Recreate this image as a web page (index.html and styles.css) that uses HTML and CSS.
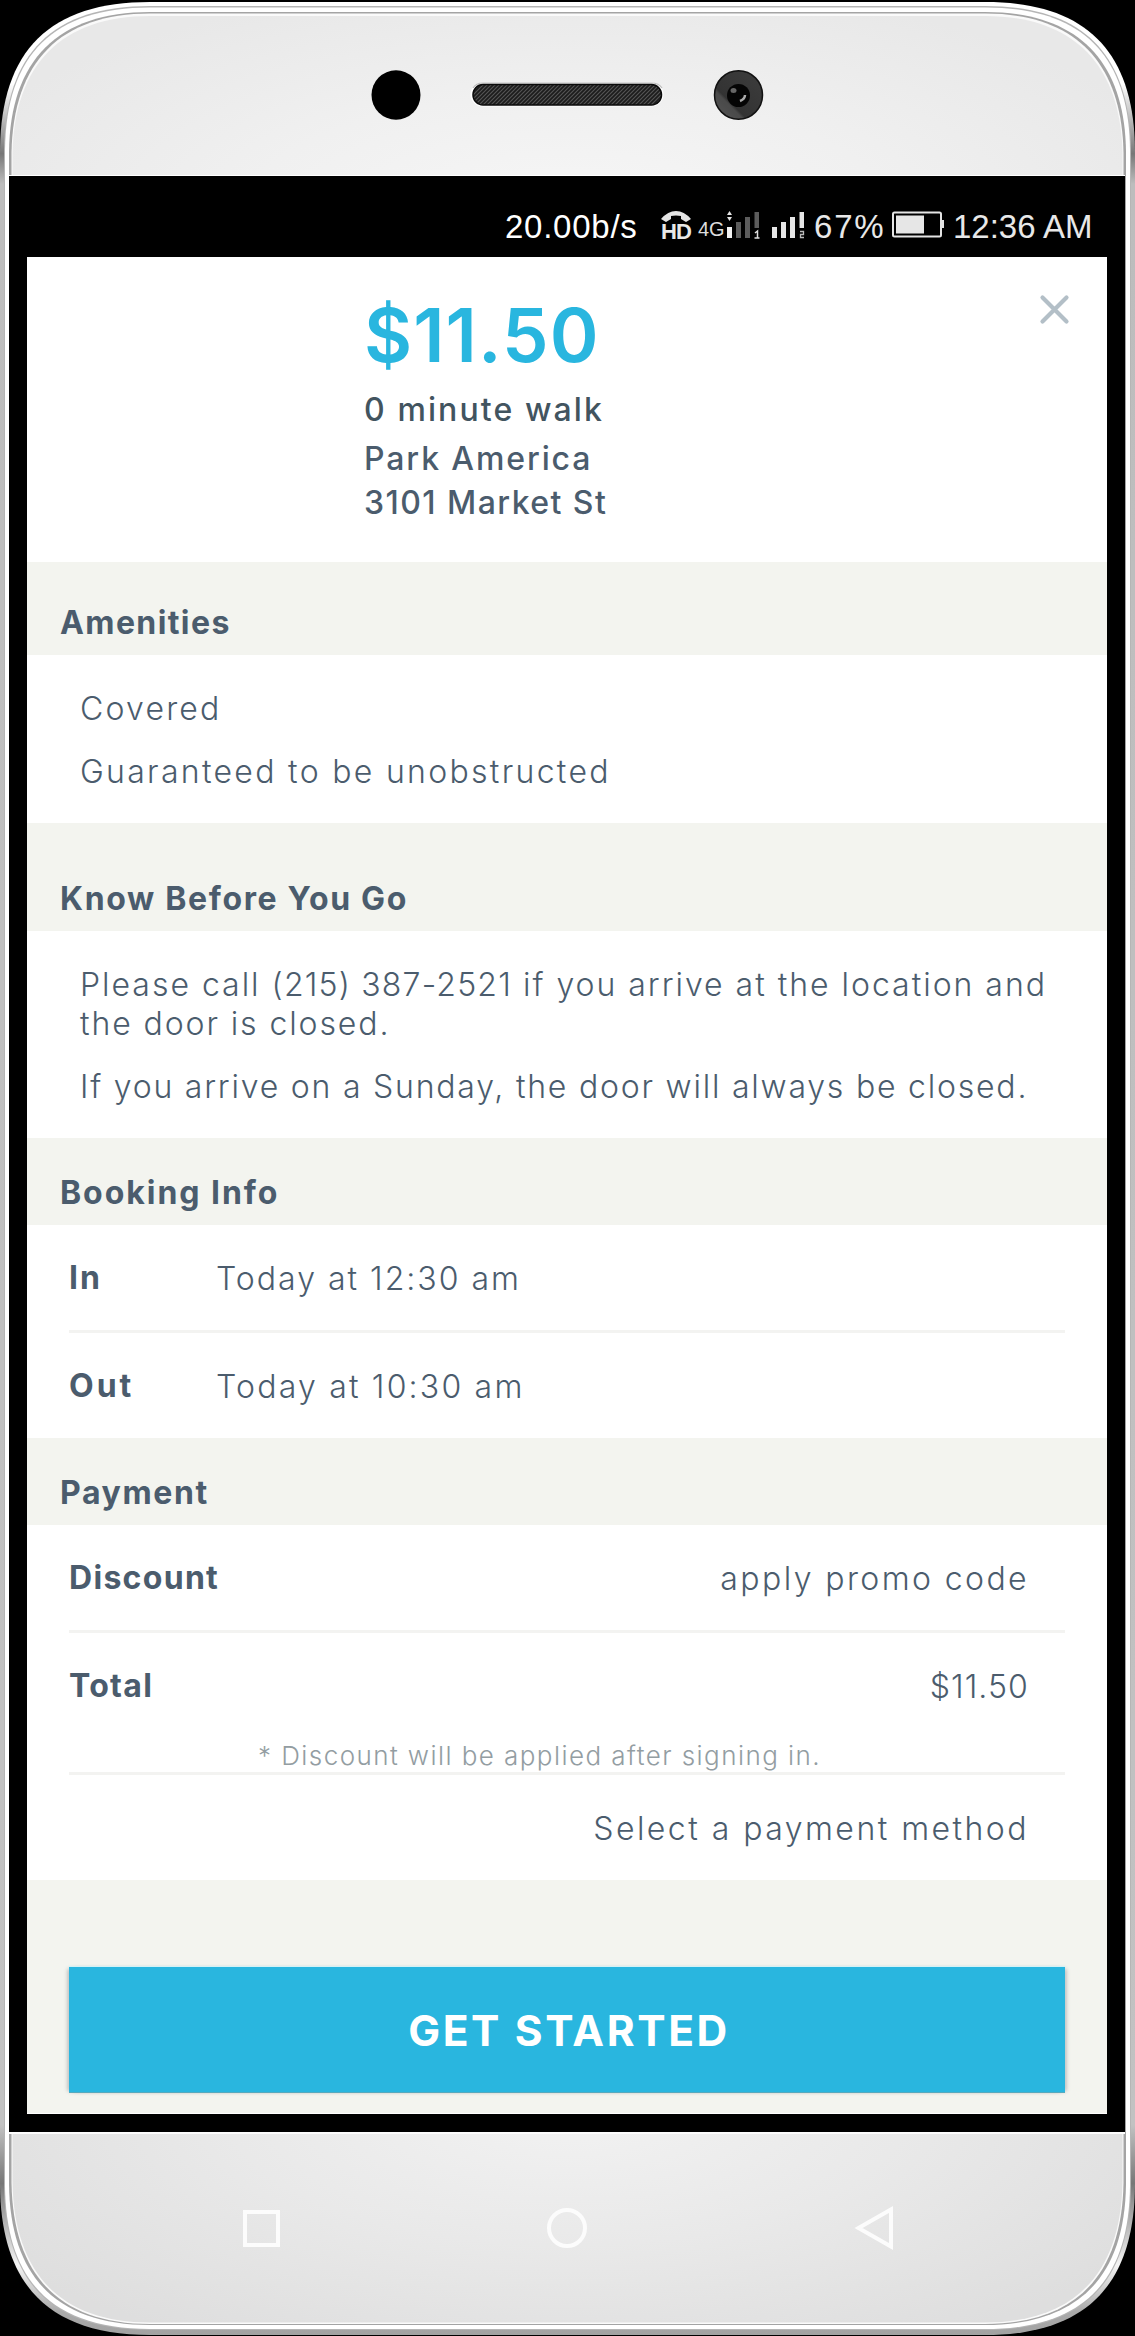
FILE: index.html
```
<!DOCTYPE html>
<html lang="en">
<head>
<meta charset="utf-8">
<title>Parking details</title>
<link rel="stylesheet" href="styles.css">
</head>
<body>
<div class="phone">
  <svg class="shell" width="1135" height="2336" viewBox="0 0 1135 2336" aria-hidden="true">
    <defs>
      <linearGradient id="edge" x1="0" y1="0" x2="0" y2="1">
        <stop offset="0" stop-color="#fff"/><stop offset=".035" stop-color="#fff"/><stop offset=".065" stop-color="#777"/>
        <stop offset=".078" stop-color="#bdbdbd"/><stop offset=".91" stop-color="#c2c2c2"/><stop offset=".935" stop-color="#777"/>
        <stop offset=".97" stop-color="#f4f4f4"/><stop offset=".99" stop-color="#aaa"/><stop offset="1" stop-color="#a2a2a2"/>
      </linearGradient>
      <radialGradient id="faceTop" gradientUnits="userSpaceOnUse" cx="0" cy="0" r="1" gradientTransform="translate(567 210) scale(640 230)">
        <stop offset="0" stop-color="#f6f6f6"/><stop offset=".5" stop-color="#f0f0f0"/><stop offset="1" stop-color="#e8e8e8"/>
      </radialGradient>
      <radialGradient id="faceBottom" gradientUnits="userSpaceOnUse" cx="0" cy="0" r="1" gradientTransform="translate(567 2110) scale(680 270)">
        <stop offset="0" stop-color="#f2f2f2"/><stop offset=".5" stop-color="#e9e9e9"/><stop offset="1" stop-color="#dedede"/>
      </radialGradient>
      <linearGradient id="lens" x1="0" y1="1" x2="1" y2="0">
        <stop offset="0" stop-color="#555"/><stop offset=".3" stop-color="#4a4a4a"/><stop offset=".34" stop-color="#333"/><stop offset="1" stop-color="#3d3d3d"/>
      </linearGradient>
      <pattern id="mesh" width="4" height="4" patternUnits="userSpaceOnUse">
        <rect width="4" height="4" fill="#1c1c1c"/><path d="M-1 5L5-1M-1 1L1-1M3 5L5 3" stroke="#555" stroke-width="1.1"/>
      </pattern>
      <clipPath id="upper"><rect width="1135" height="1100"/></clipPath>
      <clipPath id="lower"><rect y="1100" width="1135" height="1236"/></clipPath>
    </defs>
    <path fill="url(#edge)" d="M0 150C1 50 50 2 150 2H985C1085 2 1134 50 1135 150V2186C1134 2286 1085 2335 985 2335H150C50 2335 1 2286 0 2186Z"/>
    <path fill="#b5b5b5" d="M4 150C5 53 53 6 150 6H985C1082 6 1130 53 1131 150V2186C1130 2284 1082 2330 985 2330H150C53 2330 5 2284 4 2186Z"/>
    <path fill="#fff" d="M5 150C6 54 54 7.500 150 7.500H985C1081 7.500 1129 54 1130 150V2186C1129 2283 1081 2329 985 2329H150C54 2329 6 2283 5 2186Z"/>
    <path fill="#a4a4a4" d="M9 152C10 60 58 12 150 12H985C1077 12 1125 60 1126 152V2184C1125 2278 1077 2325 985 2325H150C58 2325 10 2278 9 2184Z"/>
    <path fill="#fafafa" d="M11.500 153C13 62 60 13.500 150 13.500H985C1075 13.500 1122 62 1123.500 153V2183C1122 2276 1075 2324 985 2324H150C60 2324 13 2276 11.500 2183Z"/>
    <g id="face">
      <path clip-path="url(#upper)" fill="url(#faceTop)" d="M12.500 154C14 64 62 16 150 16H985C1073 16 1121 64 1122.500 154V1100H12.500Z"/>
      <path clip-path="url(#lower)" fill="url(#faceBottom)" d="M12.500 1100H1122.500V2182C1121 2275 1073 2322.500 985 2322.500H150C62 2322.500 14 2275 12.500 2182Z"/>
    </g>
    <ellipse cx="396" cy="95" rx="24.500" ry="24.700"/>
    <rect x="470.500" y="82.500" width="193" height="24" rx="12" fill="#fff"/>
    <path d="M473 88Q476 83 483 83H651Q659 83 662 88" fill="none" stroke="#bbb" stroke-width="1.200"/>
    <rect x="473" y="84.500" width="188.500" height="20.500" rx="10" fill="url(#mesh)" stroke="#0a0a0a" stroke-width="1.500"/>
    <ellipse cx="738.500" cy="95" rx="24" ry="24.200" fill="url(#lens)" stroke="#111" stroke-width="1.500"/>
    <ellipse cx="738.500" cy="95.500" rx="11.500" ry="11.500" fill="#050505"/>
    <ellipse cx="733.500" cy="90.500" rx="3" ry="2.500" fill="#666"/>
    <path d="M740 101Q745 99 745 95" fill="none" stroke="#aaa" stroke-width="2.500"/>
  </svg>

  <div class="glass">
    <div class="statusbar">
      <span class="rate">20.00b/s</span>
      <span class="hd">
        <svg width="32" height="11" viewBox="0 0 32 11"><path d="M1 8Q8 0 16 0T31 8L26 11L21 8V5Q16 4 11 5V8L6 11Z" fill="#e4e4e4"/></svg>
        <b>HD</b>
      </span>
      <span class="net">4G</span>
      <svg class="sig1" width="33" height="28" viewBox="0 0 33 28">
        <path d="M0 4L2.500 0L5 4ZM0 6H5L2.500 10Z" fill="#e4e4e4"/><path d="M0 16H5V27H0Z" fill="#f2f2f2"/>
        <path d="M9 11H14V27H9ZM18 6H23V27H18ZM27.500 1H32V17H27.500Z" fill="#5c5c5c"/><path d="M28 22L30.500 20V27M27.500 27H32.500" fill="none" stroke="#ddd" stroke-width="1.500"/>
      </svg>
      <svg class="sig2" width="33" height="28" viewBox="0 0 33 28">
        <path d="M0 16H5V27H0ZM9 11H14V27H9ZM18 6H23V27H18ZM27.500 1H32V17H27.500Z" fill="#e6e6e6"/><path d="M28 20.500H31.500V23.500H28.500V26.500H32" fill="none" stroke="#bbb" stroke-width="1.300"/>
      </svg>
      <span class="pct">67%</span>
      <svg class="batt" width="53" height="27" viewBox="0 0 53 27">
        <rect x="1" y="1.500" width="48" height="24" rx="1.500" fill="none" stroke="#e4e4e4" stroke-width="2"/>
        <rect x="4" y="4.500" width="28" height="18" fill="#e6e6e6"/><path d="M49 9H52V17H49Z" fill="#e4e4e4"/>
      </svg>
      <span class="clock">12:36 AM</span>
    </div>

    <main class="screen">
      <header class="summary">
        <div class="facts">
          <div class="price">$11.50</div>
          <div class="walk">0 minute walk</div>
          <div class="place">Park America</div>
          <div class="address">3101 Market St</div>
        </div>
        <svg class="close" width="31" height="31" viewBox="0 0 31 31"><path d="M3.500 3.500L27.500 27.500M27.500 3.500L3.500 27.500" stroke="#b3bfc7" stroke-width="4.200" stroke-linecap="round"/></svg>
      </header>

      <h2 class="band amenities">Amenities</h2>
      <section class="notes notes-amenities">
        <p class="covered">Covered</p>
        <p class="guarantee">Guaranteed to be unobstructed</p>
      </section>

      <h2 class="band know">Know Before You Go</h2>
      <section class="notes notes-know">
        <p><span class="call">Please call <span class="tel">(215) 387-2521</span> if you arrive at the location and</span><br><span class="door">the door is closed.</span></p>
        <p class="sunday">If you arrive on a Sunday, the door will always be closed.</p>
      </section>

      <h2 class="band booking">Booking Info</h2>
      <section class="rows">
        <div class="row"><b class="key">In</b><span class="when">Today at 12:30 am</span></div>
        <div class="row"><b class="key wide">Out</b><span class="when out">Today at 10:30 am</span></div>
      </section>

      <h2 class="band payment">Payment</h2>
      <section class="rows">
        <div class="row"><b class="key discount">Discount</b><span class="value promo">apply promo code</span></div>
        <div class="row total"><b class="key discount">Total</b><span class="value amount">$11.50</span><small class="hint">* Discount will be applied after signing in.</small></div>
        <div class="row"><span class="value method">Select a payment method</span></div>
      </section>

      <div class="actions"><button class="start">GET STARTED</button></div>
    </main>
  </div>

  <nav class="keys">
    <svg width="37" height="37" viewBox="0 0 37 37"><rect x="2" y="2" width="33" height="33" fill="none" stroke="#fcfcfc" stroke-width="4"/></svg>
    <svg width="40" height="40" viewBox="0 0 40 40"><circle cx="20" cy="20" r="18" fill="none" stroke="#fcfcfc" stroke-width="4"/></svg>
    <svg width="40" height="46" viewBox="0 0 40 46"><path d="M37 4.500V41.500L4.500 23Z" fill="none" stroke="#fcfcfc" stroke-width="4"/></svg>
  </nav>
</div>
</body>
</html>
```
FILE: styles.css
```
* { box-sizing: border-box; }
body { margin: 0; background: #000; color: #4b5c6d; font-family: Inter, "Liberation Sans", sans-serif; }
svg { display: block; flex: none; }
h2, p { margin: 0; }

.phone { position: relative; width: 1135px; height: 2336px; padding: 176px 10px 0 9px; }
.shell { position: absolute; left: 0; top: 0; }
.glass {
  position: relative; width: 1116px; height: 1956px; padding: 0 18px;
  background: #000; box-shadow: 0 -1px #fff, 0 2px #fcfcfc;
}

/* status bar */
.statusbar {
  display: flex; align-items: flex-start; height: 81px; padding-top: 35px; padding-left: 478px;
  color: #e8e8e8; font: 33px/32px "Liberation Sans", Arial, sans-serif; white-space: nowrap;
}
.rate { width: 155px; color: #fff; letter-spacing: .75px; }
.hd { width: 38px; }
.hd b { display: block; padding-left: 1px; font: 700 22px/20px "Liberation Sans", Arial, sans-serif; letter-spacing: -.8px; }
.net { width: 29px; font-size: 20px; line-height: 36px; color: #ddd; }
.sig1 { margin-right: 12px; }
.sig2 { margin-right: 9px; }
.pct { width: 78px; letter-spacing: 1.8px; }
.batt { margin-right: 8px; }

/* screen */
.screen { width: 1080px; height: 1857px; background: #f3f4ef; font-size: 32px; border-bottom: 1px solid #fff; overflow: hidden; white-space: nowrap; }
.summary { display: flex; justify-content: space-between; height: 305px; padding: 41px 37px 0 337px; background: #fff; font-weight: 500; }
.price { font-size: 74px; line-height: 74px; font-weight: 600; color: #29b6df; letter-spacing: 1.1px; }
.walk { margin-top: 13px; line-height: 50px; letter-spacing: 2.1px; color: #42545f; }
.place { margin-top: 2px; line-height: 44px; letter-spacing: 1.9px; }
.address { line-height: 44px; letter-spacing: 1.45px; }
.close { margin-top: -4px; }

.band { display: flex; align-items: flex-end; padding: 0 32px 12.500px 33px; font-size: 32px; line-height: 40px; font-weight: 700; }
.amenities { height: 93px; letter-spacing: 1.4px; }
.know { height: 108px; letter-spacing: 1.65px; }
.booking { height: 87px; letter-spacing: 1.95px; }
.payment { height: 87px; letter-spacing: 1.6px; }

.notes { padding: 34px 53px 0; background: #fff; font-weight: 300; line-height: 39px; }
.notes p + p { margin-top: 24px; }
.notes-amenities { height: 168px; }
.notes-know { height: 207px; }
.covered { letter-spacing: 2.2px; }
.guarantee { letter-spacing: 2.3px; }
.call { letter-spacing: 1.98px; }
.tel { letter-spacing: 1.2px; }
.door { letter-spacing: 1.9px; }
.sunday { letter-spacing: 1.78px; }

.rows { padding: 0 42px; background: #fff; }
.row { display: flex; flex-wrap: wrap; height: 105px; padding-top: 33px; line-height: 39px; }
.row + .row { border-top: 3px solid #f3f3f1; height: 108px; }
.key { width: 147px; font-weight: 700; letter-spacing: 2px; }
.key.wide { letter-spacing: 3px; }
.key.discount { letter-spacing: 1.3px; }
.when { padding-top: 1px; font-weight: 300; letter-spacing: 2px; }
.when.out { letter-spacing: 2.2px; }
.value { margin-left: auto; padding: 1px 36px 0 0; font-weight: 300; }
.promo { letter-spacing: 2.4px; }
.amount { letter-spacing: 1.1px; }
.method { letter-spacing: 2.46px; }
.row.total { height: 142px; align-content: flex-start; }
.hint { flex: 0 0 100%; height: 29px; margin-top: 34px; padding-left: 189px; font-size: 26px; line-height: 31px; font-weight: 300; letter-spacing: 1.43px; color: #939da2; }

.actions { padding: 87px 42px 0; }
.start {
  display: block; width: 100%; height: 126px; padding: 0 0 0 4px; border: 0; border-bottom: 1px solid #57a9bd;
  background: #29b6df; color: #fff; font: 700 42.500px/127px Inter, sans-serif; letter-spacing: 2.6px;
  box-shadow: 0 -1px 1px #d5f1f5, 3px 0 4px -2px #aaa, -3px 0 4px -2px #aaa; text-align: center;
}

/* hardware keys */
.keys { position: relative; display: flex; align-items: center; justify-content: space-between; height: 46px; margin-top: 73px; padding: 0 231px 0 234px; }
```
